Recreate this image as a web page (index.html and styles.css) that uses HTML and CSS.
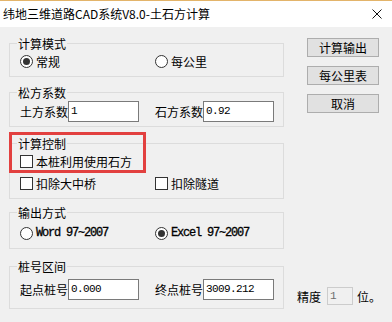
FILE: index.html
```html
<!DOCTYPE html>
<html lang="zh-CN">
<head>
    <meta charset="UTF-8">
    <title>土石方计算</title>
    <link rel="stylesheet" href="styles.css">
</head>
<body>
    <div class="titlebar">
        <span class="title">纬地三维道路CAD系统V8.0-土石方计算</span>
        <svg class="close" width="10" height="10" viewBox="0 0 10 10"><path d="M0.5 0.5L9.5 9.5M9.5 0.5L0.5 9.5" stroke="#111" stroke-width="1"/></svg>
    </div>
    <div class="main">
        <div class="left">
            <fieldset class="group g1">
                <legend>计算模式</legend>
                <div class="row">
                    <label class="opt"><span class="radio on"></span>常规</label>
                    <label class="opt"><span class="radio"></span>每公里</label>
                </div>
            </fieldset>
            <fieldset class="group g2">
                <legend>松方系数</legend>
                <div class="row">
                    <label class="field">土方系数<span class="box">1</span></label>
                    <label class="field">石方系数<span class="box">0.92</span></label>
                </div>
            </fieldset>
            <fieldset class="group g3">
                <legend>计算控制</legend>
                <div class="row">
                    <label class="opt"><span class="check"></span>本桩利用使用石方</label>
                </div>
                <div class="row">
                    <label class="opt"><span class="check"></span>扣除大中桥</label>
                    <label class="opt"><span class="check"></span>扣除隧道</label>
                </div>
            </fieldset>
            <fieldset class="group g4">
                <legend>输出方式</legend>
                <div class="row">
                    <label class="opt"><span class="radio"></span><span class="mono">Word 97~2007</span></label>
                    <label class="opt"><span class="radio on"></span><span class="mono">Excel 97~2007</span></label>
                </div>
            </fieldset>
            <fieldset class="group g5">
                <legend>桩号区间</legend>
                <div class="row">
                    <label class="field">起点桩号<span class="box">0.000</span></label>
                    <label class="field">终点桩号<span class="box">3009.212</span></label>
                </div>
            </fieldset>
            <div class="mark"></div>
        </div>
        <div class="right">
            <button class="btn">计算输出</button>
            <button class="btn">每公里表</button>
            <button class="btn">取消</button>
            <div class="prec">精度<span class="box small">1</span>位。</div>
        </div>
    </div>
</body>
</html>
```

FILE: styles.css
```css
*{margin:0; padding:0; box-sizing:border-box}
body{width:392px; height:322px; background:#f0f0f0; font:12px/13px "Noto Sans CJK SC", "Microsoft YaHei", sans-serif; color:#000; overflow:hidden}

.titlebar{height:27px; background:#fff; border-top:1px solid #e3b46a; display:flex; align-items:center; padding:0 10px 0 3px; justify-content:space-between}
.title{font-size:12px; line-height:13px; margin-top:-1px}
.close{display:block}

.main{display:flex; padding:10px 0 0 9px}
.left{width:275px; position:relative}
.right{width:95px; margin-left:13px; display:flex; flex-direction:column; padding-top:1px}

.group{border:1px solid #dcdcdc; padding:0 8px 0 10px; min-width:0}
.group legend{padding:0 1px; margin-left:-3px; line-height:13px}
.g1{padding-top:3px; padding-bottom:7px}
.g2{margin-top:9px; padding-top:2px; padding-bottom:4px}
.g3{margin-top:10px; padding-top:3px; padding-bottom:7px}
.g4{margin-top:7px; padding-top:6px; padding-bottom:7px}
.g5{margin-top:11px; padding-top:6px; padding-bottom:8px}

.row{display:grid; grid-template-columns:135px 1fr; align-items:center; min-height:16px}
.g3 .row + .row{margin-top:6px}

.opt{display:flex; align-items:center; gap:3px; white-space:nowrap}
.radio{width:13px; height:13px; border:1px solid #333; border-radius:50%; background:#fff; display:flex; align-items:center; justify-content:center; flex-shrink:0}
.radio.on::after{content:''; width:7px; height:7px; border-radius:50%; background:#333}
.check{width:13px; height:13px; border:1px solid #333; background:#fff; flex-shrink:0}
.mono{font-family:"Liberation Mono", monospace; font-size:12px; letter-spacing:-1.2px; -webkit-text-stroke:0.3px #000}

.field{display:flex; align-items:center; white-space:nowrap}
.box{width:71px; height:21px; border:1px solid #7a7a7a; background:#fff; font-family:"Liberation Mono", monospace; font-size:11px; letter-spacing:-0.6px; line-height:19px; padding-left:2px}
.box.small{width:26px; height:18px; line-height:16px; border-color:#ccc; background:#f0f0f0; color:#6d6d6d; margin:0 4px 0 6px}

.mark{position:absolute; left:0; top:95px; width:137px; height:41px; border:3px solid #e2403f}

.btn{width:72px; height:19px; margin-left:10px; margin-bottom:9px; background:#e1e1e1; border:1px solid #adadad; font:12px/17px "Noto Sans CJK SC", sans-serif; color:#000}
.prec{margin-top:auto; margin-bottom:4px; display:flex; align-items:center}
```
